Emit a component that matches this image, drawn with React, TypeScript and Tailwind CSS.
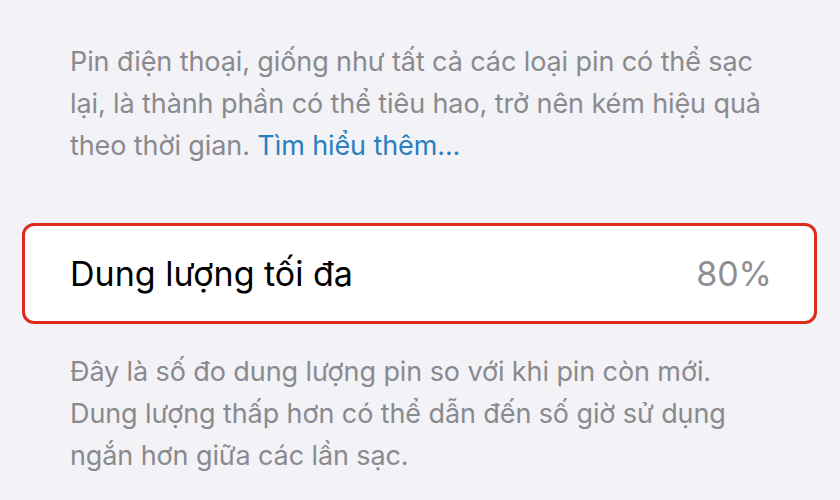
export default function App() {
  return (
    <div
      className="w-[840px] h-[500px] bg-[#f2f2f7] overflow-hidden"
      style={{ fontFamily: 'Inter, "Noto Sans", sans-serif' }}
    >
      <div className="pt-[41px] px-[70px] text-[27px] leading-[42px] text-[#8a8a8e] tracking-[-0.1px]">
        <div>Pin điện thoại, giống như tất cả các loại pin có thể sạc</div>
        <div>lại, là thành phần có thể tiêu hao, trở nên kém hiệu quả</div>
        <div>
          theo thời gian. <span className="text-[#2a7fc0]">Tìm hiểu thêm...</span>
        </div>
      </div>

      <div className="mt-[56px] ml-[22px] mr-[23px] h-[101px] rounded-[12px] border-[3px] border-[#dd2c1c] bg-white flex items-center justify-between pl-[45px] pr-[42px]">
        <span className="text-[34px] text-black">Dung lượng tối đa</span>
        <span className="text-[34px] text-[#8e8e93]">80%</span>
      </div>

      <div className="mt-[27px] px-[70px] text-[27px] leading-[42px] text-[#8a8a8e] tracking-[-0.1px]">
        <div>Đây là số đo dung lượng pin so với khi pin còn mới.</div>
        <div>Dung lượng thấp hơn có thể dẫn đến số giờ sử dụng</div>
        <div>ngắn hơn giữa các lần sạc.</div>
      </div>
    </div>
  )
}
